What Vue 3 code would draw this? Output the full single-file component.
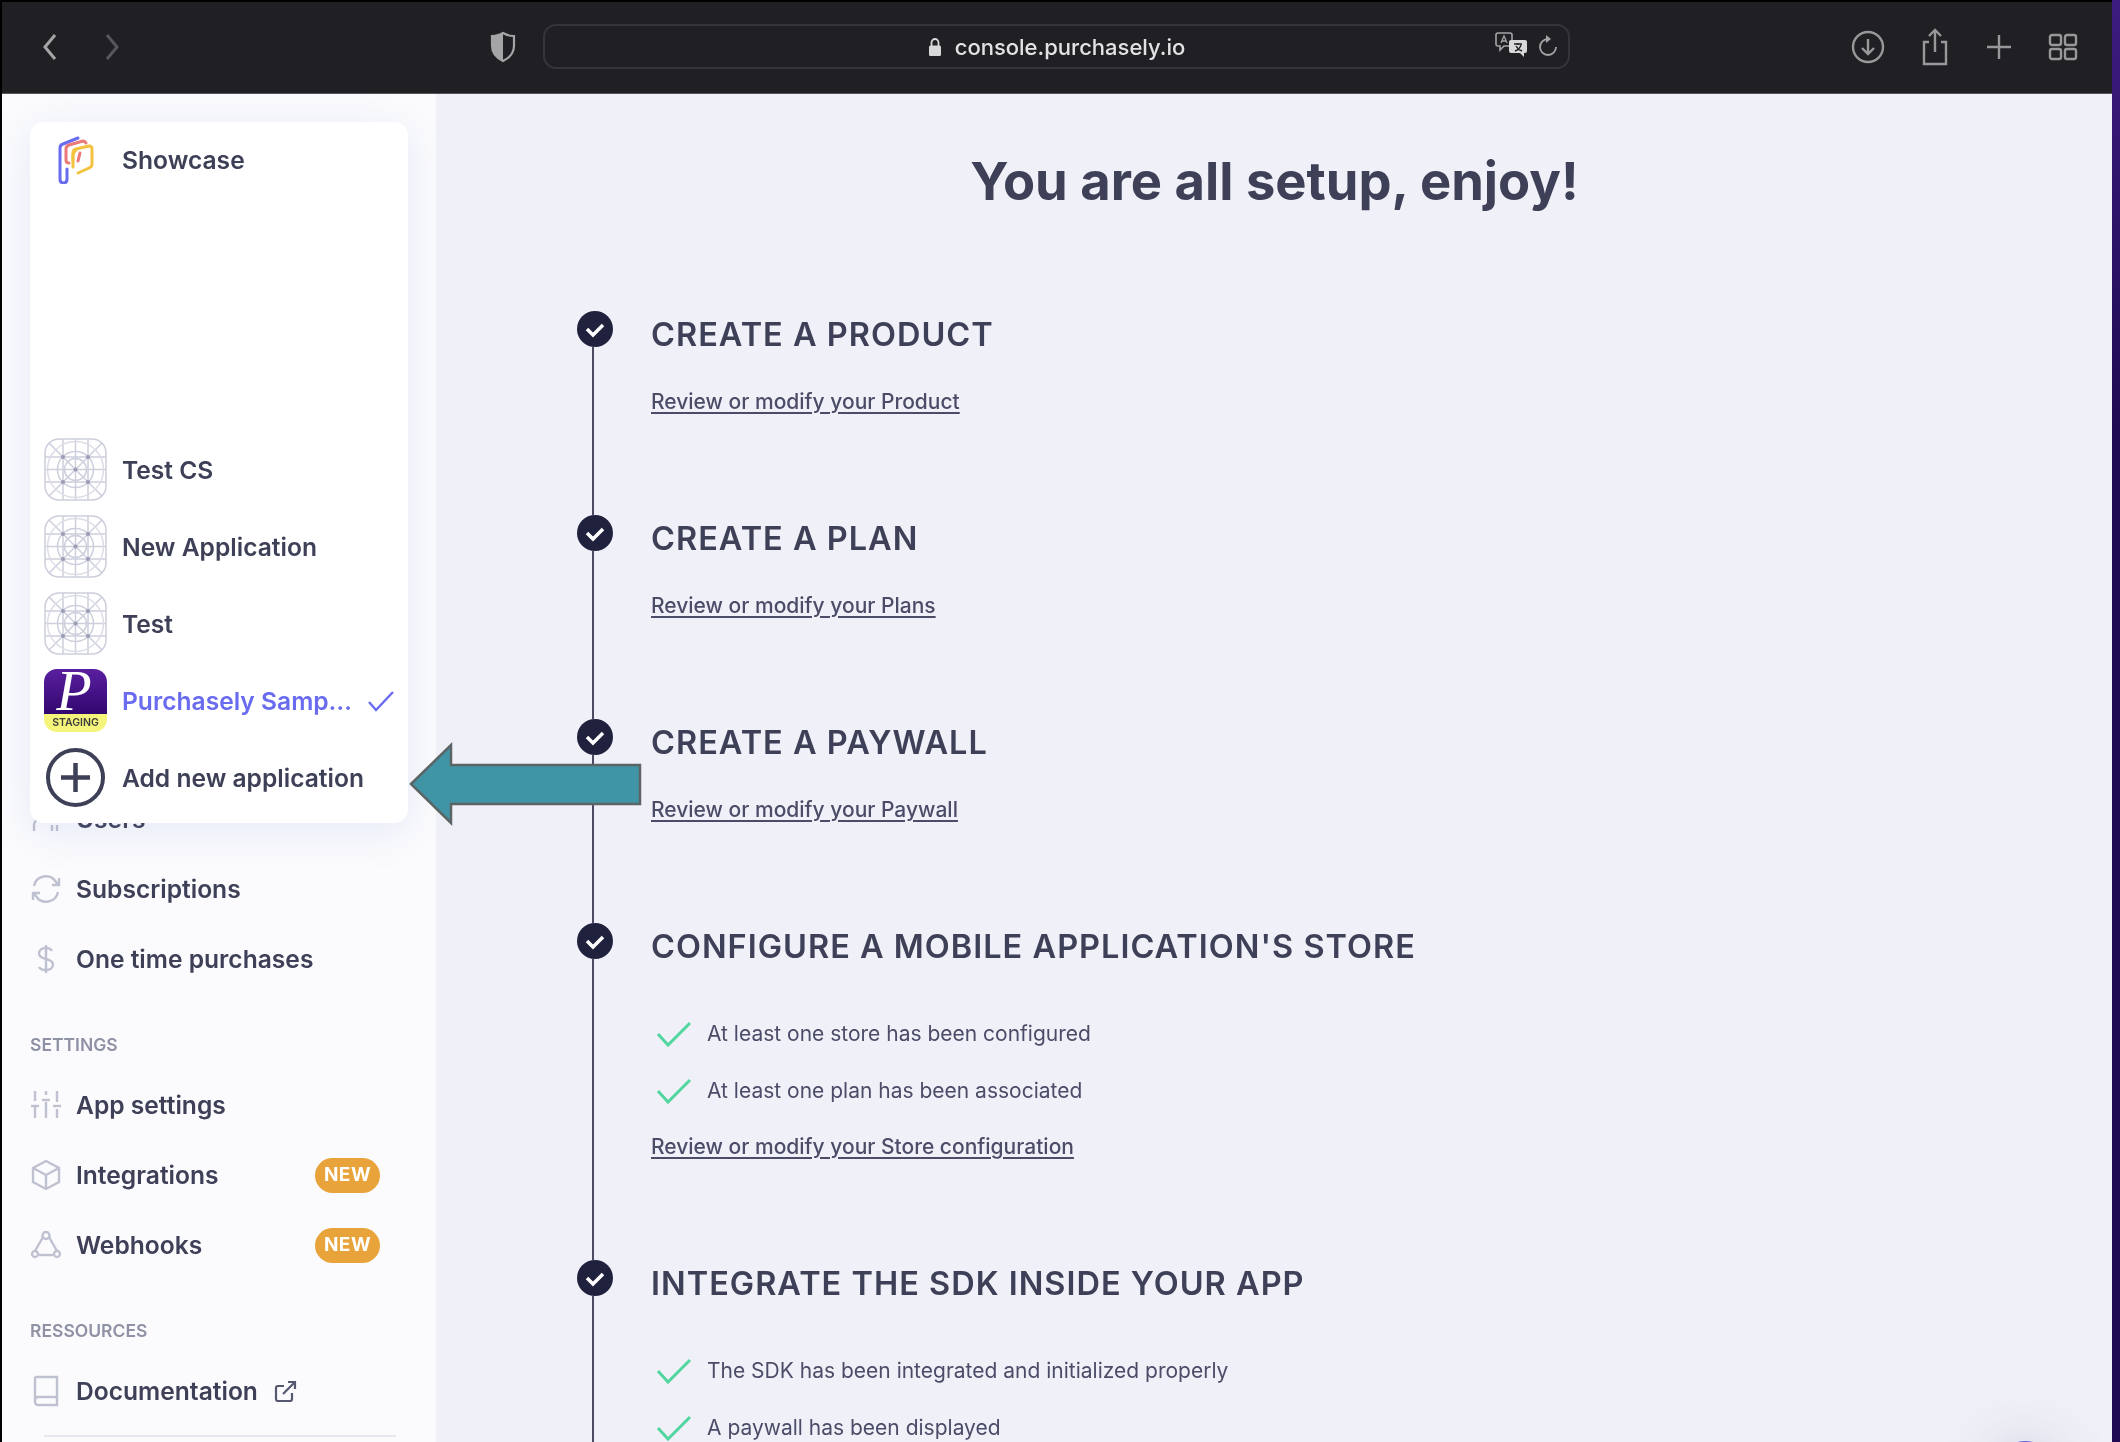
<template>
  <div class="window">
    <div class="browser">
      <!-- browser toolbar -->
      <header class="toolbar">
        <div class="history">
          <svg class="chev" width="18" height="30" viewBox="0 0 18 30"><path d="M14 3 4 15l10 12" /></svg>
          <svg class="chev dim" width="18" height="30" viewBox="0 0 18 30"><path d="M4 3l10 12L4 27" /></svg>
        </div>
        <svg class="shield" width="26" height="32" viewBox="0 0 26 32">
          <path d="M13 2c3 2 7 3 11 3v10c0 7-5 12-11 15C7 27 2 22 2 15V5c4 0 8-1 11-3z" fill="none" stroke="#a5a5a8" stroke-width="2.2" />
          <path d="M13 2c3 2 7 3 11 3v10c0 7-5 12-11 15z" fill="#a5a5a8" transform="matrix(-1 0 0 1 26 0)" />
        </svg>
        <div class="address">
          <span class="url">
            <svg width="14" height="20" viewBox="0 0 14 20"><path d="M3.5 9V5.5a3.5 3.5 0 0 1 7 0V9" fill="none" stroke="#d8d8da" stroke-width="1.8" /><rect x="1" y="8.5" width="12" height="10.500" rx="1.5" fill="#d8d8da" /></svg>
            console.purchasely.io
          </span>
          <svg class="translate" width="34" height="26" viewBox="0 0 34 26">
            <path d="M3 1h12a2 2 0 0 1 2 2v9a2 2 0 0 1-2 2H9l-4 4v-4H3a2 2 0 0 1-2-2V3a2 2 0 0 1 2-2z" fill="none" stroke="#a5a5a8" stroke-width="1.6" />
            <path d="M6 11l3-7 3 7M7 9h4" fill="none" stroke="#a5a5a8" stroke-width="1.3" />
            <path d="M16 8h14a2 2 0 0 1 2 2v9a2 2 0 0 1-2 2h-1v4l-4-4h-9a2 2 0 0 1-2-2v-9a2 2 0 0 1 2-2z" fill="#d8d8da" />
            <path d="M19 12h8M23 11v2M20 19c3-1 5-3 6-6M21 14c1 2 3 4 6 5" fill="none" stroke="#201f24" stroke-width="1.4" />
          </svg>
          <svg class="reload" width="20" height="26" viewBox="0 0 20 26">
            <path d="M10 5a8 8 0 1 0 8 8" fill="none" stroke="#a5a5a8" stroke-width="1.8" />
            <path d="M8 1l5 4-5 4z" fill="#a5a5a8" />
          </svg>
        </div>
        <div class="tools">
          <svg width="34" height="34" viewBox="0 0 34 34"><circle cx="17" cy="17" r="15" /><path d="M17 9v15M11 18l6 6 6-6" /></svg>
          <svg width="30" height="38" viewBox="0 0 30 38"><path d="M9 14H4v22h22V14h-5M15 24V2M9 8l6-6 6 6" /></svg>
          <svg width="28" height="28" viewBox="0 0 28 28"><path d="M14 2v24M2 14h24" /></svg>
          <svg width="30" height="30" viewBox="0 0 30 30"><rect x="2" y="3" width="11" height="10" rx="2" /><rect x="17" y="3" width="11" height="10" rx="2" /><rect x="2" y="17" width="11" height="10" rx="2" /><rect x="17" y="17" width="11" height="10" rx="2" /></svg>
        </div>
      </header>

      <div class="page">
        <!-- sidebar -->
        <aside class="sidebar">
          <template v-for="group in navGroups" :key="group.title">
            <div v-if="group.title" class="nav-label">{{ group.title }}</div>
            <div v-for="item in group.items" :key="item.name" class="nav-item">
              <svg class="nav-icon" width="32" height="32" viewBox="0 0 32 32">
                <path v-for="d in item.paths" :key="d" :d="d" />
              </svg>
              <span>{{ item.name }}</span>
              <svg v-if="item.external" class="external" width="23" height="23" viewBox="0 0 23 23">
                <path d="M18 13v6a2 2 0 0 1-2 2H4a2 2 0 0 1-2-2V8a2 2 0 0 1 2-2h6M9 14 21 2M14 2h7v7" />
              </svg>
              <span v-if="item.badge" class="badge">NEW</span>
            </div>
          </template>
          <div class="nav-divider"></div>
        </aside>

        <!-- contenu principal -->
        <main class="content">
          <h1 class="title">You are all setup, enjoy!</h1>
          <div class="steps">
            <section v-for="step in steps" :key="step.title" class="step">
              <div class="rail">
                <span class="dot">
                  <svg width="22" height="18" viewBox="0 0 22 18"><path d="M3 8l6 6L19 4" /></svg>
                </span>
                <span class="line"></span>
              </div>
              <div class="step-body">
                <h2 class="step-title">{{ step.title }}</h2>
                <ul v-if="step.checks" class="checks">
                  <li v-for="check in step.checks" :key="check">
                    <svg width="36" height="26" viewBox="0 0 36 26"><path d="M2 13l10 11L34 2" /></svg>
                    {{ check }}
                  </li>
                </ul>
                <a v-if="step.link" class="step-link" :class="{ tight: step.checks }">{{ step.link }}</a>
              </div>
            </section>
          </div>
          <span class="chat-bubble"></span>
        </main>
      </div>
    </div>
    <div class="edge"></div>

    <!-- menu des applications -->
    <div class="app-menu">
      <div class="app-row current">
        <span class="app-logo">
          <svg width="36" height="48" viewBox="0 0 36 48" fill="none" stroke-width="3" stroke-linecap="round" stroke-linejoin="round">
            <path d="M9 33v10q0 4-3.500 4T2 43V12q0-3 3-4l15-6" stroke="#6a6cf0" />
            <path d="M11 27q-3 0-3-3V13q0-3 3-4l14-4q2 0 3 2" stroke="#ea7a78" />
            <path d="M15 31V17q0-3 3-4l13-3q3 0 3 3v15q0 3-3 4l-11 5" stroke="#f3c23f" />
            <path d="M15 24q-1-7 3-10" stroke="#f3c23f" />
            <path d="M20 25l2-8" stroke="#ea7a78" />
          </svg>
        </span>
        <span>Showcase</span>
      </div>
      <div class="app-list">
        <div v-for="name in placeholderApps" :key="name" class="app-row">
          <svg class="tile" width="63" height="63" viewBox="0 0 63 63" fill="none" stroke="#cdcfdc" stroke-width="1.5">
            <rect x="1" y="1" width="61" height="61" rx="14" />
            <path d="M1 31.500h61M31.500 1v61M1 19h61M1 44h61M19 1v61M44 1v61M5 5l53 53M58 5 5 58" />
            <circle cx="31.500" cy="31.500" r="28" stroke="#dcdde6" />
            <circle cx="31.500" cy="31.500" r="18" />
            <circle cx="31.500" cy="31.500" r="11" />
            <g fill="#9a9cb5" stroke="none">
              <circle cx="19" cy="19" r="2" />
              <circle cx="44" cy="19" r="2" />
              <circle cx="19" cy="44" r="2" />
              <circle cx="44" cy="44" r="2" />
              <circle cx="31.500" cy="31.500" r="2" />
            </g>
          </svg>
          <span>{{ name }}</span>
        </div>
        <div class="app-row selected">
          <span class="p-icon">
            <svg class="p-letter" width="63" height="45" viewBox="0 0 63 45">
              <text x="30" y="41" text-anchor="middle">P</text>
            </svg>
            <span class="p-band">STAGING</span>
          </span>
          <span class="app-name">Purchasely Samp…</span>
          <svg class="tick" width="28" height="22" viewBox="0 0 28 22"><path d="M2 12l7 8L26 2" /></svg>
        </div>
        <div class="app-row">
          <svg class="tile" width="63" height="63" viewBox="0 0 63 63" fill="none" stroke="#3d4057" stroke-width="4">
            <circle cx="31.500" cy="31.500" r="27.500" />
            <path d="M31.500 17v29M17 31.500h29" stroke-width="4.500" />
          </svg>
          <span>Add new application</span>
        </div>
      </div>
    </div>

    <!-- flèche d'annotation -->
    <svg class="arrow" width="236" height="84" viewBox="0 0 236 84">
      <path d="M3 42 43 3v20h189v39H43v19z" fill="#3f94a5" stroke="#5c6466" stroke-width="2.5" />
    </svg>
  </div>
</template>

<script setup>
const placeholderApps = ['Test CS', 'New Application', 'Test']

const navGroups = [
  {
    title: '',
    items: [
      { name: 'Users', paths: ['M4 28v-6a6 6 0 0 1 6-6h4', 'M22 28v-6', 'M27 28v-6'] },
      { name: 'Subscriptions', paths: ['M4 13A12 12 0 0 1 26 9l3 3', 'M29 5v7h-7', 'M28 19A12 12 0 0 1 6 23l-3-3', 'M3 27v-7h7'] },
      { name: 'One time purchases', paths: ['M16 2v28', 'M22 8c-1-2-3-3-6-3-4 0-7 2-7 5.500S12 15 16 16s7 2 7 5.500-3 5.500-7 5.500c-3 0-6-1-7-3'] },
    ],
  },
  {
    title: 'SETTINGS',
    items: [
      { name: 'App settings', paths: ['M5 2v10', 'M5 18v11', 'M1 17h8', 'M16 2v4', 'M16 13v16', 'M12 11h8', 'M27 2v11', 'M27 20v9', 'M23 17h8'] },
      { name: 'Integrations', badge: true, paths: ['M16 2l13 7v14l-13 7-13-7V9z', 'M3 9l13 7 13-7', 'M16 16v14'] },
      { name: 'Webhooks', badge: true, paths: ['M13 8 5 22', 'M19 8l8 14', 'M9 26h14', 'M16 3a3.500 3.500 0 1 0 .01 0z', 'M5 22a3 3 0 1 0 .01 0z', 'M27 22a3 3 0 1 0 .01 0z'] },
    ],
  },
  {
    title: 'RESSOURCES',
    items: [
      { name: 'Documentation', external: true, paths: ['M6 2h21v28H8a3 3 0 0 1-3-3V3z', 'M5 25a3 3 0 0 1 3-3h19'] },
    ],
  },
]

const steps = [
  { title: 'CREATE A PRODUCT', link: 'Review or modify your Product' },
  { title: 'CREATE A PLAN', link: 'Review or modify your Plans' },
  { title: 'CREATE A PAYWALL', link: 'Review or modify your Paywall' },
  {
    title: "CONFIGURE A MOBILE APPLICATION'S STORE",
    checks: ['At least one store has been configured', 'At least one plan has been associated'],
    link: 'Review or modify your Store configuration',
  },
  {
    title: 'INTEGRATE THE SDK INSIDE YOUR APP',
    checks: ['The SDK has been integrated and initialized properly', 'A paywall has been displayed'],
  },
]
</script>

<style>
html,
body {
  margin: 0;
  overflow: hidden;
  background: #000;
}
</style>

<style scoped>
.window {
  position: relative;
  display: flex;
  width: 2120px;
  height: 1442px;
  overflow: hidden;
  padding-left: 2px;
  box-sizing: border-box;
  background: #000;
  font-family: Inter, 'Liberation Sans', sans-serif;
  color: #3d4057;
  filter: blur(0.5px);
}

.browser {
  flex: 1;
  display: flex;
  flex-direction: column;
  min-width: 0;
}

.edge {
  width: 8px;
  background: linear-gradient(#3d1d80, #1f0a52 30%);
}

/* toolbar */
.toolbar {
  height: 92px;
  margin-top: 2px;
  box-sizing: border-box;
  flex: none;
  display: flex;
  align-items: center;
  padding-bottom: 2px;
  background: #201f24;
  border-bottom: 1px solid #55555a;
}

.history {
  display: flex;
  gap: 44px;
  margin-left: 39px;
}

.chev path {
  fill: none;
  stroke: #a5a5a8;
  stroke-width: 3;
}

.chev.dim path {
  stroke: #56565b;
}

.shield {
  margin-left: 369px;
}

.address {
  position: relative;
  width: 1027px;
  height: 45px;
  margin-left: 27px;
  box-sizing: border-box;
  display: flex;
  align-items: center;
  justify-content: center;
  border: 2px solid #353539;
  border-radius: 13px;
}

.url {
  display: flex;
  align-items: center;
  gap: 13px;
  font-size: 22px;
  font-weight: 500;
  color: #e2e2e4;
}

.translate {
  position: absolute;
  right: 39px;
  top: 6px;
}

.reload {
  position: absolute;
  right: 10px;
  top: 8px;
}

.tools {
  display: flex;
  align-items: center;
  gap: 35px;
  margin-left: 281px;
}

.tools svg {
  fill: none;
  stroke: #98989b;
  stroke-width: 2.4;
}

/* page */
.page {
  flex: 1;
  display: flex;
  min-height: 0;
}

.sidebar {
  width: 435px;
  flex: none;
  box-sizing: border-box;
  padding-top: 690px;
  background: #fbfbfd;
  border-right: 1px solid #f1f2f7;
}

.nav-item {
  height: 70px;
  display: flex;
  align-items: center;
  gap: 14px;
  padding: 0 56px 0 28px;
  font-size: 24.6px;
  font-weight: 600;
  line-height: 32px;
}

.nav-icon {
  flex: none;
  fill: none;
  stroke: #bfc1d1;
  stroke-width: 2.4;
}

.external {
  margin-left: 2px;
  fill: none;
  stroke: #55586f;
  stroke-width: 2.2;
}

.badge {
  margin-left: auto;
  width: 65px;
  height: 35px;
  display: flex;
  align-items: center;
  justify-content: center;
  border-radius: 18px;
  background: #e8a33a;
  color: #fff;
  font-size: 19px;
  font-weight: 700;
  letter-spacing: 0.5px;
}

.nav-label {
  margin: 40px 0 14px 28px;
  font-size: 17.5px;
  line-height: 22px;
  font-weight: 600;
  color: #8f91a5;
}

.nav-divider {
  height: 2px;
  margin: 9px 40px 0 42px;
  background: #e6e7ef;
}

/* contenu */
.content {
  position: relative;
  flex: 1;
  min-width: 0;
  overflow: hidden;
  padding: 57px 0 0 140px;
  box-sizing: border-box;
  background: #f0f1f8;
}

.title {
  height: 60px;
  margin: 0 0 100px -140px;
  text-align: center;
  font-size: 52.500px;
  line-height: 60px;
  font-weight: 700;
}

.step {
  display: flex;
  gap: 38px;
}

.rail {
  width: 36px;
  flex: none;
  display: flex;
  flex-direction: column;
  align-items: flex-start;
}

.dot {
  width: 36px;
  height: 36px;
  flex: none;
  display: flex;
  align-items: center;
  justify-content: center;
  border-radius: 50%;
  background: #20213c;
}

.dot svg {
  margin-top: 2px;
}

.dot path {
  fill: none;
  stroke: #fff;
  stroke-width: 3.5;
}

.line {
  flex: 1;
  width: 2px;
  margin-left: 15px;
  background: #4b4b63;
}

.step-body {
  flex: 1;
  padding-bottom: 97px;
}

.step-title {
  margin: 2px 0 -2px;
  font-size: 32.500px;
  line-height: 44px;
  font-weight: 600;
  letter-spacing: 1px;
}

.step-link {
  display: block;
  margin-top: 31px;
  font-size: 21px;
  line-height: 32px;
  font-weight: 500;
  color: #4b4d68;
  text-decoration: underline;
  text-underline-offset: 3px;
}

.step-link.tight {
  margin-top: 24px;
}

.checks {
  list-style: none;
  margin: 51px 0 0;
  padding: 0;
  display: flex;
  flex-direction: column;
  gap: 25px;
}

.checks li {
  display: flex;
  align-items: center;
  gap: 15px;
  padding-left: 5px;
  font-size: 21px;
  line-height: 32px;
  color: #4b4d68;
}

.checks path {
  fill: none;
  stroke: #52d6a0;
  stroke-width: 3;
}

.chat-bubble {
  position: absolute;
  left: 1556px;
  top: 1347px;
  width: 64px;
  height: 64px;
  border-radius: 50%;
  background: #6a62e0;
  box-shadow: 0 0 60px rgba(40, 40, 80, 0.18);
}

/* menu */
.app-menu {
  position: absolute;
  left: 30px;
  top: 122px;
  width: 378px;
  height: 701px;
  box-sizing: border-box;
  display: flex;
  flex-direction: column;
  padding: 0 14px 7px;
  border-radius: 14px;
  background: #fff;
  box-shadow: 0 8px 40px rgba(120, 140, 220, 0.16);
  font-size: 24.6px;
  font-weight: 600;
}

.app-list {
  margin-top: auto;
  display: flex;
  flex-direction: column;
}

.app-row {
  height: 77px;
  display: flex;
  align-items: center;
  gap: 15px;
  white-space: nowrap;
}

.app-row.current {
  height: 75px;
}

.app-logo {
  width: 63px;
  height: 63px;
  display: flex;
  align-items: center;
  justify-content: center;
}

.tile {
  flex: none;
}

.selected {
  color: #6a6cf0;
}

.p-icon {
  width: 63px;
  height: 63px;
  flex: none;
  display: flex;
  flex-direction: column;
}

.p-letter {
  display: block;
  border-radius: 13px 13px 0 0;
  background: linear-gradient(#5a1fa0, #32076f);
}

.p-letter text {
  font-family: 'Liberation Serif', serif;
  font-style: italic;
  font-weight: 400;
  font-size: 58px;
  fill: #fff;
}

.p-band {
  height: 18px;
  border-radius: 0 0 13px 13px;
  background: #f5f57c;
  color: #3d3d3d;
  text-align: center;
  font-size: 10.500px;
  line-height: 17px;
  font-weight: 600;
}

.app-name {
  flex: 1;
}

.tick {
  flex: none;
  margin-right: 6px;
}

.tick path {
  fill: none;
  stroke: #6a6cf0;
  stroke-width: 2.4;
}

.arrow {
  position: absolute;
  left: 408px;
  top: 742px;
}
</style>
